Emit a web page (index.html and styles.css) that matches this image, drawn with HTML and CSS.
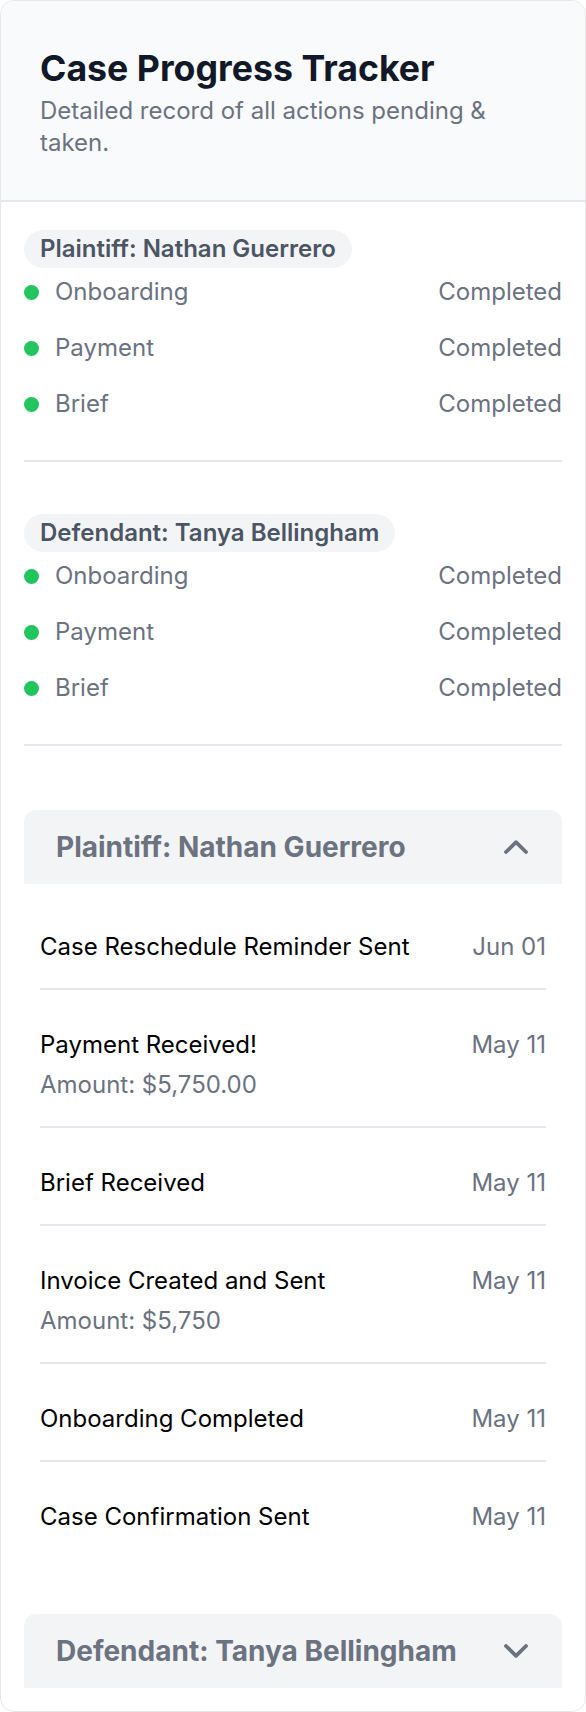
FILE: index.html
```html
<!DOCTYPE html>
<html lang="en">
<head>
    <meta charset="UTF-8">
    <meta name="viewport" content="width=device-width, initial-scale=1.0">
    <title>Case Progress Tracker</title>
    <link rel="stylesheet" href="styles.css">
</head>
<body>

    <div class="card">
        <header class="card-header">
            <h1>Case Progress Tracker</h1>
            <p class="subtitle">Detailed record of all actions pending &amp; taken.</p>
        </header>

        <div class="card-body">
            <!-- Status summary per party -->
            <section class="status-group">
                <span class="party-pill">Plaintiff: Nathan Guerrero</span>
                <ul class="status-list">
                    <li><span class="dot"></span><span class="step">Onboarding</span><span class="state">Completed</span></li>
                    <li><span class="dot"></span><span class="step">Payment</span><span class="state">Completed</span></li>
                    <li><span class="dot"></span><span class="step">Brief</span><span class="state">Completed</span></li>
                </ul>
            </section>

            <section class="status-group">
                <span class="party-pill">Defendant: Tanya Bellingham</span>
                <ul class="status-list">
                    <li><span class="dot"></span><span class="step">Onboarding</span><span class="state">Completed</span></li>
                    <li><span class="dot"></span><span class="step">Payment</span><span class="state">Completed</span></li>
                    <li><span class="dot"></span><span class="step">Brief</span><span class="state">Completed</span></li>
                </ul>
            </section>

            <!-- Activity log -->
            <div class="accordion">
                <div class="accordion-item open">
                    <button class="accordion-head">
                        <span>Plaintiff: Nathan Guerrero</span>
                        <svg class="chevron" width="24" height="14" viewBox="0 0 24 14"><polyline points="2,12 12,2.2 22,12" /></svg>
                    </button>
                    <ul class="log">
                        <li>
                            <div class="log-text"><p class="log-title">Case Reschedule Reminder Sent</p></div>
                            <span class="log-date">Jun 01</span>
                        </li>
                        <li>
                            <div class="log-text">
                                <p class="log-title">Payment Received!</p>
                                <p class="log-note">Amount: $5,750.00</p>
                            </div>
                            <span class="log-date">May 11</span>
                        </li>
                        <li>
                            <div class="log-text"><p class="log-title">Brief Received</p></div>
                            <span class="log-date">May 11</span>
                        </li>
                        <li>
                            <div class="log-text">
                                <p class="log-title">Invoice Created and Sent</p>
                                <p class="log-note">Amount: $5,750</p>
                            </div>
                            <span class="log-date">May 11</span>
                        </li>
                        <li>
                            <div class="log-text"><p class="log-title">Onboarding Completed</p></div>
                            <span class="log-date">May 11</span>
                        </li>
                        <li>
                            <div class="log-text"><p class="log-title">Case Confirmation Sent</p></div>
                            <span class="log-date">May 11</span>
                        </li>
                    </ul>
                </div>

                <div class="accordion-item">
                    <button class="accordion-head">
                        <span>Defendant: Tanya Bellingham</span>
                        <svg class="chevron" width="24" height="14" viewBox="0 0 24 14"><polyline points="2,2 12,11.8 22,2" /></svg>
                    </button>
                </div>
            </div>
        </div>
    </div>

</body>
</html>
```

FILE: styles.css
```css
* {
    margin: 0;
    padding: 0;
    box-sizing: border-box;
    font-family: Inter, "Noto Sans", Arial, sans-serif;
}

body {
    background: #ffffff;
    color: #000000;
}

.card {
    width: 586px;
    min-height: 1712px;
    border: 1px solid #e5e7eb;
    border-radius: 14px;
    overflow: hidden;
    background: #ffffff;
    padding-bottom: 23px;
}

/* Header */
.card-header {
    background: #f9fafb;
    border-bottom: 2px solid #e5e7eb;
    padding: 47px 37px 41px 39px;
}

.card-header h1 {
    font-size: 35.7px;
    line-height: 40px;
    font-weight: 700;
    color: #111827;
}

.subtitle {
    margin-top: 7px;
    max-width: 470px;
    font-size: 24px;
    line-height: 32px;
    color: #6b7280;
}

.card-body {
    padding: 0 23px;
}

/* Status groups */
.status-group {
    padding: 28px 0 40px;
    border-bottom: 2px solid #e5e7eb;
}

.status-group + .status-group {
    margin-top: 24px;
}

.party-pill {
    display: inline-block;
    background: #f3f4f6;
    color: #4b5563;
    font-size: 24px;
    font-weight: 600;
    line-height: 38px;
    padding: 0 16px;
    border-radius: 999px;
}

.status-list {
    list-style: none;
    margin-top: 8px;
    display: flex;
    flex-direction: column;
    gap: 24px;
}

.status-list li {
    display: flex;
    align-items: center;
    font-size: 24px;
    line-height: 32px;
    color: #6b7280;
}

.dot {
    width: 15px;
    height: 15px;
    border-radius: 50%;
    background: #22c55e;
    margin-right: 16px;
}

.step {
    flex: 1;
}

/* Accordion */
.accordion {
    margin-top: 64px;
    display: flex;
    flex-direction: column;
    gap: 48px;
}

.accordion-head {
    width: 100%;
    display: flex;
    align-items: center;
    justify-content: space-between;
    background: #f3f4f6;
    border: none;
    border-radius: 12px 12px 0 0;
    padding: 0 34px 0 32px;
    height: 74px;
    font-size: 28px;
    font-weight: 700;
    color: #6b7280;
    text-align: left;
    cursor: pointer;
}

.chevron polyline {
    fill: none;
    stroke: #6b7280;
    stroke-width: 3.8;
    stroke-linecap: round;
    stroke-linejoin: round;
}

.log {
    list-style: none;
    padding: 8px 16px;
}

.log li {
    display: flex;
    justify-content: space-between;
    align-items: flex-start;
    padding: 39px 0 25px;
    border-bottom: 2px solid #e5e7eb;
    font-size: 24px;
    line-height: 32px;
}

.log li:last-child {
    border-bottom: none;
}

.log-title {
    color: #000000;
}

.log-note {
    margin-top: 8px;
    color: #6b7280;
}

.log-date {
    color: #6b7280;
}
```
